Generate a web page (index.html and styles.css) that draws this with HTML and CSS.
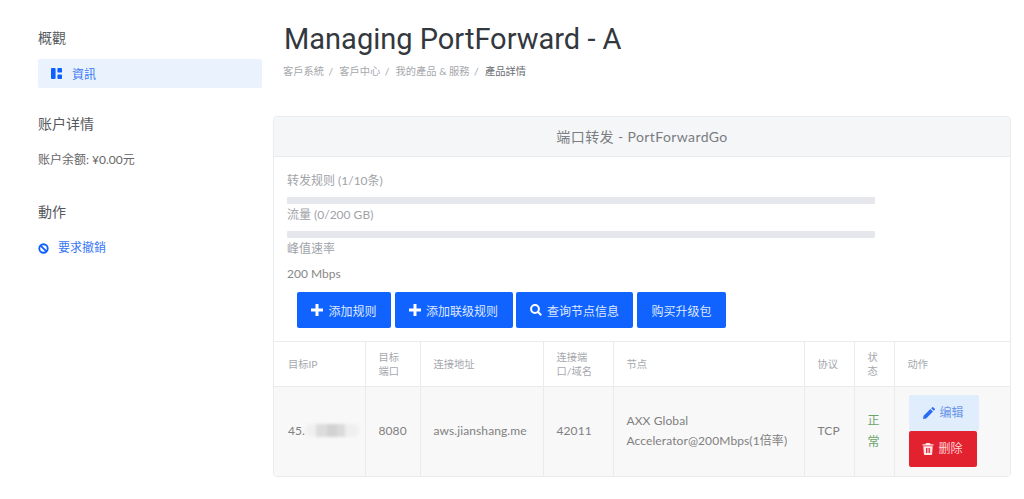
FILE: index.html
```html
<!DOCTYPE html>
<html lang="zh">
<head>
    <meta charset="UTF-8">
    <meta name="viewport" content="width=device-width, initial-scale=1.0">
    <title>Managing PortForward - A</title>
    <link rel="stylesheet" href="styles.css">
</head>
<body>
    <div class="page">
        <aside class="sidebar">
            <h3 class="side-title">概觀</h3>
            <a class="side-active" href="#">
                <svg class="side-icon" viewBox="0 0 12 12"><path d="M0 1a1 1 0 0 1 1-1h3a1 1 0 0 1 1 1v10a1 1 0 0 1-1 1H1a1 1 0 0 1-1-1zM7 1a1 1 0 0 1 1-1h3a1 1 0 0 1 1 1v3a1 1 0 0 1-1 1H8a1 1 0 0 1-1-1zM7 8a1 1 0 0 1 1-1h3a1 1 0 0 1 1 1v3a1 1 0 0 1-1 1H8a1 1 0 0 1-1-1z"/></svg>
                資訊
            </a>
            <h3 class="side-title side-account">账户详情</h3>
            <p class="side-text">账户余额: ¥0.00元</p>
            <h3 class="side-title side-actions">動作</h3>
            <a class="side-link" href="#">
                <svg class="ban-icon" viewBox="0 0 12 12"><circle cx="6" cy="6" r="4.6"/><path d="M2.800 2.800l6.400 6.400"/></svg>
                要求撤銷
            </a>
        </aside>

        <main class="content">
            <h1 class="page-title">Managing PortForward - A</h1>
            <nav class="crumbs">
                <a href="#">客戶系統</a><span class="sep">/</span>
                <a href="#">客戶中心</a><span class="sep">/</span>
                <a href="#">我的產品 &amp; 服務</a><span class="sep">/</span>
                <span class="crumb-now">產品詳情</span>
            </nav>

            <section class="card">
                <div class="card-head">端口转发 - PortForwardGo</div>
                <div class="card-body">
                    <p class="stat stat-first">转发规则 (1/10条)</p>
                    <div class="bar"></div>
                    <p class="stat">流量 (0/200 GB)</p>
                    <div class="bar"></div>
                    <p class="stat">峰值速率</p>
                    <p class="stat stat-value">200 Mbps</p>
                    <div class="btn-row">
                        <a class="btn btn-one" href="#">
                            <svg class="btn-icon" viewBox="0 0 12 12"><path d="M4.500 0h3v4.500H12v3H7.500V12h-3V7.500H0v-3h4.500z"/></svg>添加规则
                        </a>
                        <a class="btn btn-two" href="#">
                            <svg class="btn-icon" viewBox="0 0 12 12"><path d="M4.500 0h3v4.500H12v3H7.500V12h-3V7.500H0v-3h4.500z"/></svg>添加联级规则
                        </a>
                        <a class="btn btn-three" href="#">
                            <svg class="btn-icon search-icon" viewBox="0 0 12 12"><circle cx="5" cy="5" r="3.900"/><path d="M7.800 7.800l3.400 3.400"/></svg>查询节点信息
                        </a>
                        <a class="btn btn-four" href="#">购买升级包</a>
                    </div>
                </div>

                <table class="rules">
                    <colgroup>
                        <col class="c-ip"><col class="c-port"><col class="c-addr"><col class="c-conn">
                        <col class="c-node"><col class="c-proto"><col class="c-state"><col class="c-act">
                    </colgroup>
                    <thead>
                        <tr>
                            <th>目标IP</th>
                            <th>目标端口</th>
                            <th>连接地址</th>
                            <th>连接端口/域名</th>
                            <th>节点</th>
                            <th>协议</th>
                            <th>状态</th>
                            <th>动作</th>
                        </tr>
                    </thead>
                    <tbody>
                        <tr>
                            <td class="ip-cell">45.<span class="blurred"></span></td>
                            <td>8080</td>
                            <td>aws.jianshang.me</td>
                            <td>42011</td>
                            <td>AXX Global Accelerator@200Mbps(1倍率)</td>
                            <td>TCP</td>
                            <td class="state-ok">正常</td>
                            <td>
                                <a class="act act-edit" href="#">
                                    <svg class="act-icon" viewBox="0 0 12 12"><path d="M0 12l.6-3.200L7.400 2 10 4.600l-6.800 6.800zM8.200 1.200L9 .4a1 1 0 0 1 1.400 0l1.200 1.200a1 1 0 0 1 0 1.400l-.8.8z"/></svg>编辑
                                </a>
                                <a class="act act-del" href="#">
                                    <svg class="act-icon" viewBox="0 0 12 12"><path d="M4 0h4l.6 1.200h2.900v1.300H.5V1.200h2.900zM1.300 3.300h9.400l-.6 8a.8.8 0 0 1-.8.7H2.700a.8.8 0 0 1-.8-.7zM4 5v5h.9V5zm1.600 0v5h.9V5zm1.600 0v5h.9V5z" fill-rule="evenodd"/></svg>删除
                                </a>
                            </td>
                        </tr>
                    </tbody>
                </table>
            </section>
        </main>
    </div>
</body>
</html>
```

FILE: styles.css
```css
body {
    margin: 0;
    background-color: white;
    color: #555;
    font-family: Lato, "Noto Sans CJK SC", sans-serif;
    font-size: 12px;
}

a {
    text-decoration: none;
}

.page {
    display: flex;
    padding: 0 13px 0 38px;
}

.sidebar {
    width: 224px;
    flex-shrink: 0;
    padding-top: 29px;
}

.side-title {
    margin: 0;
    font-size: 14px;
    font-weight: 400;
    line-height: 18px;
    color: #55595e;
}

.side-active {
    display: flex;
    align-items: center;
    height: 29px;
    margin-top: 12px;
    padding-left: 13px;
    background-color: #e9f2fd;
    border-radius: 2px;
    color: #3a77f5;
}

.side-icon {
    width: 11px;
    height: 11px;
    margin-right: 10px;
    fill: #0d5fff;
}

.side-account {
    margin-top: 27px;
}

.side-text {
    margin: 18px 0 0;
    line-height: 18px;
    color: #666;
}

.side-actions {
    margin-top: 34px;
}

.side-link {
    display: flex;
    align-items: center;
    margin-top: 18px;
    line-height: 18px;
    color: #3a77f5;
}

.ban-icon {
    width: 11px;
    height: 11px;
    margin-right: 9px;
    fill: none;
    stroke: #0d5fff;
    stroke-width: 2;
}

.content {
    flex: 1;
    margin-left: 11px;
    min-width: 0;
}

.page-title {
    margin: 0;
    padding: 20px 0 0 11px;
    font-family: Roboto, sans-serif;
    font-size: 29px;
    font-weight: 400;
    line-height: 38px;
    color: #32383e;
}

.crumbs {
    margin-top: 5px;
    padding-left: 10px;
    font-size: 10.25px;
    line-height: 16px;
    color: #a5a8ad;
}

.crumbs a {
    color: #a5a8ad;
}

.sep {
    margin: 0 3.5px 0 4.5px;
}

.crumb-now {
    color: #6a6e73;
}

.card {
    margin-top: 37px;
    border: 1px solid #e9ebef;
    border-radius: 4px;
    overflow: hidden;
}

.card-head {
    height: 39px;
    line-height: 40px;
    background-color: #f5f6f8;
    border-bottom: 1px solid #e9ebef;
    text-align: center;
    font-size: 14px;
    letter-spacing: 0.4px;
    color: #7a7d82;
}

.card-body {
    height: 184px;
    padding: 14px 13px 0;
    box-sizing: border-box;
}

.stat {
    margin: 0;
    height: 19px;
    line-height: 19px;
    color: #a0a3a8;
}

.stat-first {
    margin-bottom: 7px;
}

.stat-value {
    margin-top: 6px;
    color: #888;
}

.bar {
    width: 588px;
    height: 7px;
    margin-bottom: 1px;
    background-color: #e6e7ec;
    border-radius: 1px;
}

.bar + .stat + .bar {
    margin-top: 7px;
}

.btn-row {
    display: flex;
    gap: 3.5px;
    margin-top: 9px;
    padding-left: 10px;
}

.btn {
    display: flex;
    align-items: center;
    justify-content: center;
    height: 36px;
    background-color: #1163ff;
    border-radius: 2px;
    color: #dfe9ff;
    box-sizing: border-box;
}

.btn-one {
    width: 94px;
}

.btn-two {
    width: 118px;
}

.btn-three {
    width: 117px;
}

.btn-four {
    width: 89px;
    margin-left: 0.5px;
}

.btn-icon {
    width: 12px;
    height: 12px;
    margin-right: 5px;
    fill: white;
}

.search-icon {
    fill: none;
    stroke: white;
    stroke-width: 2;
}

.rules {
    width: 100%;
    table-layout: fixed;
    border-collapse: collapse;
}

.c-ip { width: 91px; }
.c-port { width: 55px; }
.c-addr { width: 123px; }
.c-conn { width: 70px; }
.c-node { width: 191px; }
.c-proto { width: 50px; }
.c-state { width: 40px; }

.rules th,
.rules td {
    border-left: 1px solid #e9ebef;
    padding: 0 13px;
    text-align: left;
    box-sizing: border-box;
}

.rules th:first-child,
.rules td:first-child {
    border-left: 0;
    padding-left: 14px;
}

.rules th {
    height: 45px;
    border-top: 1px solid #e9ebef;
    border-bottom: 1px solid #e9ebef;
    font-size: 10.25px;
    font-weight: 400;
    line-height: 14px;
    color: #a5a8ad;
}

.rules td {
    height: 89px;
    background-color: #f8f8f8;
    color: #808080;
    line-height: 20px;
    letter-spacing: 0.1px;
}

.rules td.ip-cell {
    white-space: nowrap;
    padding-right: 0;
}

.blurred {
    display: inline-block;
    width: 54px;
    height: 13px;
    vertical-align: -2px;
    border-radius: 7px;
    background: linear-gradient(90deg, #f0f0f0 0 20%, #dcdcdc 20% 40%, #d2d2d2 40% 60%, #dadada 60% 75%, #efefef 75%);
    filter: blur(1.5px);
}

.rules td.state-ok {
    color: #6aa56a;
    line-height: 21px;
}

.act {
    display: flex;
    align-items: center;
    justify-content: center;
    height: 36px;
    border-radius: 2px;
    margin-left: 1px;
}

.act-edit {
    width: 70px;
    background-color: #e0edfd;
    color: #6a96e8;
}

.act-del {
    width: 68px;
    background-color: #e32230;
    color: #ffd2d6;
}

.act-icon {
    width: 12px;
    height: 12px;
    margin-right: 4px;
}

.act-edit .act-icon {
    fill: #2a6cf6;
}

.act-del .act-icon {
    fill: #ffe6e8;
}
```
